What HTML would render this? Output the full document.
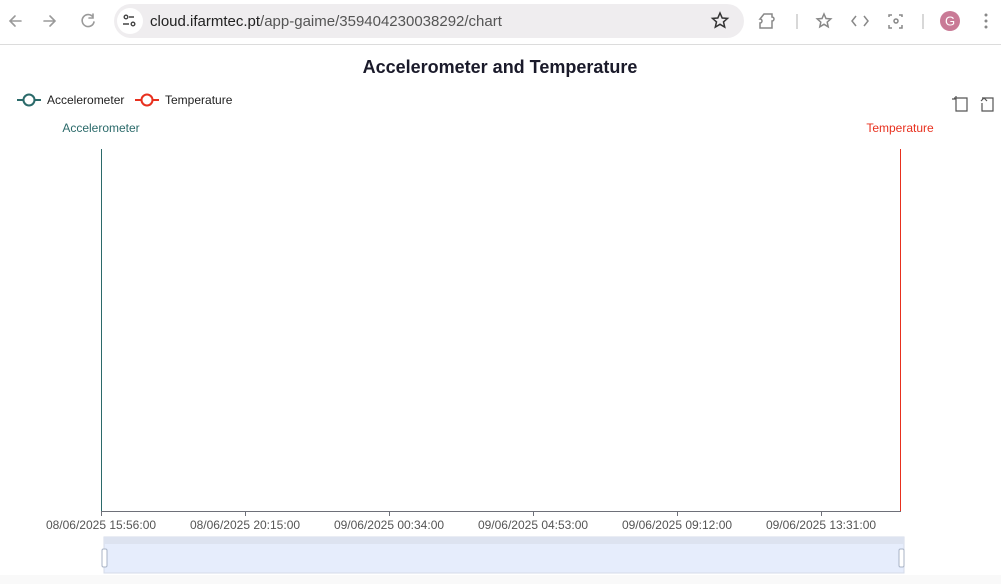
<!DOCTYPE html>
<html><head><meta charset="utf-8"><style>
body{margin:0;width:1001px;height:584px;overflow:hidden;background:#fff;font-family:"Liberation Sans",sans-serif;position:relative}
.a{position:absolute}
</style></head><body>
<div class="a" style="left:0;top:0;width:1001px;height:44px;background:#fff;border-bottom:1px solid #dcdcdc"></div>
<svg class="a" style="left:0;top:0" width="1001" height="44">
<g stroke="#9a9a9a" stroke-width="1.6" fill="none" stroke-linecap="round">
<path d="M21 21H10M15 16l-5 5 5 5"/>
<path d="M44 21h11M50 16l5 5-5 5"/>
<path d="M93 17a6 6 0 1 0 1 5M93 14v4h-4"/>
</g>
<rect x="114" y="4" width="630" height="34" rx="17" fill="#efedef"/>
<circle cx="130" cy="21" r="13" fill="#fff"/>
<g stroke="#444" stroke-width="1.4" fill="none"><circle cx="126" cy="17" r="1.8"/><path d="M129 17h5M123 24h6"/><circle cx="133" cy="24" r="1.8"/></g>
<text x="150" y="26" font-family="Liberation Sans" font-size="15" fill="#222">cloud.ifarmtec.pt<tspan fill="#555">/app-gaime/359404230038292/chart</tspan></text>
<path d="M720 13l2.2 5 5.3.4-4 3.5 1.2 5.2-4.7-2.8-4.7 2.8 1.2-5.2-4-3.5 5.3-.4z" fill="none" stroke="#333" stroke-width="1.5"/>
<g stroke="#888" stroke-width="1.5" fill="none">
<path d="M764 14h8v3a2 2 0 0 1 0 4v7h-12v-5a2 2 0 0 0 0-4z"/>
<path d="M797 14v15M923 14v15" stroke="#ccc"/>
<path d="M824 14l2 4.5 4.8.4-3.6 3.2 1 4.7-4.2-2.5-4.2 2.5 1-4.7-3.6-3.2 4.8-.4z"/>
<path d="M856 16l-4 5 4 5M864 16l4 5-4 5"/>
<path d="M889 17v-2h3M902 17v-2h-3M889 25v3h3M902 25v3h-3"/><circle cx="896" cy="21" r="2"/>
</g>
<circle cx="950" cy="21" r="10" fill="#c97a96"/>
<text x="950" y="25.5" font-size="13" fill="#fff" text-anchor="middle">G</text>
<g fill="#888"><circle cx="986" cy="15" r="1.5"/><circle cx="986" cy="21" r="1.5"/><circle cx="986" cy="27" r="1.5"/></g>
</svg>

<svg class="a" style="left:0;top:45px" width="1001" height="539" viewBox="0 45 1001 539">
<text x="500" y="73" font-size="18" font-weight="bold" fill="#1a1a2a" text-anchor="middle">Accelerometer and Temperature</text>
<path d="M17 100h24" stroke="#2b6a6a" stroke-width="2"/><circle cx="29" cy="100" r="5.5" fill="#fff" stroke="#2b6a6a" stroke-width="2"/>
<text x="47" y="104" font-size="12" fill="#222">Accelerometer</text>
<path d="M135 100h24" stroke="#e8301e" stroke-width="2"/><circle cx="147" cy="100" r="5.5" fill="#fff" stroke="#e8301e" stroke-width="2"/>
<text x="165" y="104" font-size="12" fill="#222">Temperature</text>
<g stroke="#555" stroke-width="1.2" fill="none">
<path d="M954 98h13v13h-11v-15M952 99h4"/>
<path d="M982 98h11v13h-11v-8M981 101l3-3 3 3"/>
</g>
<text x="101" y="132" font-size="12" fill="#2b6a6a" text-anchor="middle">Accelerometer</text>
<text x="900" y="132" font-size="12" fill="#e8301e" text-anchor="middle">Temperature</text>
<path d="M101.5 149v362" stroke="#2b6a6a" stroke-width="1"/>
<path d="M900.5 149v362" stroke="#e8301e" stroke-width="1"/>
<path d="M101 511.5h800" stroke="#6e7079" stroke-width="1"/>
<g stroke="#6e7079"><path d="M101.5 511v5M245.5 511v5M389.5 511v5M533.5 511v5M677.5 511v5M821.5 511v5"/></g>
<g font-size="12" fill="#555" text-anchor="middle">
<text x="101" y="529">08/06/2025 15:56:00</text>
<text x="245" y="529">08/06/2025 20:15:00</text>
<text x="389" y="529">09/06/2025 00:34:00</text>
<text x="533" y="529">09/06/2025 04:53:00</text>
<text x="677" y="529">09/06/2025 09:12:00</text>
<text x="821" y="529">09/06/2025 13:31:00</text>
</g>
<rect x="104" y="537" width="800" height="36" fill="#e6edfc" stroke="#d5dbe9"/>
<rect x="104" y="537" width="800" height="7" fill="#dde3f0"/>
<rect x="102" y="549" width="5" height="18" rx="1.5" fill="#fff" stroke="#a8b3c6"/>
<rect x="899" y="549" width="5" height="18" rx="1.5" fill="#fff" stroke="#a8b3c6"/>
<rect x="0" y="575" width="1001" height="9" fill="#f9f9f9"/>
</svg>
</body></html>
